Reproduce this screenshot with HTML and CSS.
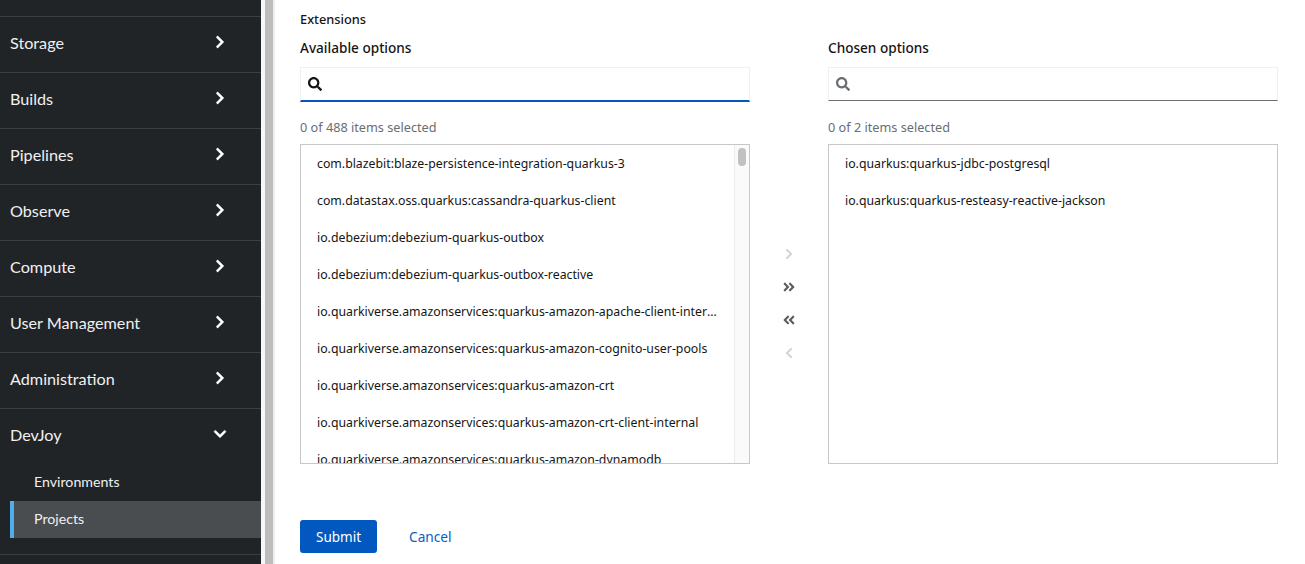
FILE: index.html
```html
<!DOCTYPE html>
<html>
<head>
  <meta charset="UTF-8">
  <title>Create Project</title>
  <link rel="stylesheet" href="styles.css">
</head>
<body>
  <svg class="defs" width="0" height="0">
    <symbol id="angle-right" viewBox="0 0 320 512"><path d="M285.476 272.971L91.132 467.314c-9.373 9.373-24.569 9.373-33.941 0l-22.667-22.667c-9.357-9.357-9.375-24.522-.04-33.901L188.505 256 34.484 101.255c-9.335-9.379-9.317-24.544.04-33.901l22.667-22.667c9.373-9.373 24.569-9.373 33.941 0L285.475 239.03c9.373 9.372 9.373 24.568.001 33.941z"/></symbol>
    <symbol id="angle-double" viewBox="0 0 448 512"><path d="M224.3 273l-136 136c-9.4 9.4-24.6 9.4-33.9 0l-22.6-22.6c-9.4-9.4-9.4-24.6 0-33.9l96.4-96.4-96.4-96.4c-9.4-9.4-9.4-24.6 0-33.9L54.3 103c9.4-9.4 24.6-9.4 33.9 0l136 136c9.5 9.4 9.5 24.6.1 34zm192-34l-136-136c-9.4-9.4-24.6-9.4-33.9 0l-22.6 22.6c-9.4 9.4-9.4 24.6 0 33.9l96.4 96.4-96.4 96.4c-9.4 9.4-9.4 24.6 0 33.9l22.6 22.6c9.4 9.4 24.6 9.4 33.9 0l136-136c9.4-9.2 9.4-24.4 0-33.8z"/></symbol>
    <symbol id="search" viewBox="0 0 512 512"><path d="M505 442.7L405.3 343c-4.5-4.5-10.6-7-17-7H372c27.6-35.3 44-79.7 44-128C416 93.1 322.9 0 208 0S0 93.1 0 208s93.1 208 208 208c48.3 0 92.7-16.4 128-44v16.3c0 6.4 2.5 12.5 7 17l99.7 99.7c9.4 9.4 24.6 9.4 33.9 0l28.3-28.3c9.4-9.4 9.4-24.6.1-34zM208 336c-70.7 0-128-57.2-128-128 0-70.7 57.2-128 128-128 70.7 0 128 57.2 128 128 0 70.7-57.2 128-128 128z"/></symbol>
  </svg>

  <div class="page">
    <!-- Sidebar -->
    <nav class="sidebar">
      <div class="nav-top"></div>
      <div class="nav-group"><span>Storage</span><svg class="nav-icon"><use href="#angle-right"/></svg></div>
      <div class="nav-group"><span>Builds</span><svg class="nav-icon"><use href="#angle-right"/></svg></div>
      <div class="nav-group"><span>Pipelines</span><svg class="nav-icon"><use href="#angle-right"/></svg></div>
      <div class="nav-group"><span>Observe</span><svg class="nav-icon"><use href="#angle-right"/></svg></div>
      <div class="nav-group"><span>Compute</span><svg class="nav-icon"><use href="#angle-right"/></svg></div>
      <div class="nav-group"><span>User Management</span><svg class="nav-icon"><use href="#angle-right"/></svg></div>
      <div class="nav-group"><span>Administration</span><svg class="nav-icon"><use href="#angle-right"/></svg></div>
      <div class="nav-section">
        <div class="nav-group open"><span>DevJoy</span><svg class="nav-icon down"><use href="#angle-right"/></svg></div>
        <a class="nav-link">Environments</a>
        <a class="nav-link current">Projects</a>
      </div>
    </nav>

    <div class="scrollbar"><div class="scrollbar-thumb"></div></div>

    <!-- Form -->
    <main class="content">
      <div class="field-label">Extensions</div>
      <div class="selector">
        <section class="pane">
          <div class="pane-title">Available options</div>
          <div class="search active"><svg class="search-icon"><use href="#search"/></svg></div>
          <div class="pane-status">0 of 488 items selected</div>
          <div class="pane-list">
            <ul class="items">
              <li>com.blazebit:blaze-persistence-integration-quarkus-3</li>
              <li>com.datastax.oss.quarkus:cassandra-quarkus-client</li>
              <li>io.debezium:debezium-quarkus-outbox</li>
              <li>io.debezium:debezium-quarkus-outbox-reactive</li>
              <li>io.quarkiverse.amazonservices:quarkus-amazon-apache-client-internal</li>
              <li>io.quarkiverse.amazonservices:quarkus-amazon-cognito-user-pools</li>
              <li>io.quarkiverse.amazonservices:quarkus-amazon-crt</li>
              <li>io.quarkiverse.amazonservices:quarkus-amazon-crt-client-internal</li>
              <li>io.quarkiverse.amazonservices:quarkus-amazon-dynamodb</li>
            </ul>
            <div class="list-scroll"><div class="list-thumb"></div></div>
          </div>
        </section>

        <div class="controls">
          <svg class="control disabled"><use href="#angle-right"/></svg>
          <svg class="control"><use href="#angle-double"/></svg>
          <svg class="control flip"><use href="#angle-double"/></svg>
          <svg class="control disabled flip"><use href="#angle-right"/></svg>
        </div>

        <section class="pane">
          <div class="pane-title">Chosen options</div>
          <div class="search"><svg class="search-icon"><use href="#search"/></svg></div>
          <div class="pane-status">0 of 2 items selected</div>
          <div class="pane-list">
            <ul class="items">
              <li>io.quarkus:quarkus-jdbc-postgresql</li>
              <li>io.quarkus:quarkus-resteasy-reactive-jackson</li>
            </ul>
          </div>
        </section>
      </div>

      <div class="actions">
        <button class="btn-submit">Submit</button>
        <a class="btn-cancel">Cancel</a>
      </div>
    </main>
  </div>
</body>
</html>
```

FILE: styles.css
```css
html, body {
  margin: 0;
  padding: 0;
  height: 564px;
  overflow: hidden;
  background: #fff;
}
body {
  font-family: "Noto Sans", Arial, sans-serif;
  color: #151515;
}
.defs {
  position: absolute;
}
.page {
  display: flex;
  height: 564px;
  overflow: hidden;
}

/* sidebar */
.sidebar {
  width: 261px;
  flex: none;
  background: #212427;
  color: #f0f0f0;
  font-family: Lato, sans-serif;
}
.nav-top {
  height: 17px;
  box-sizing: border-box;
  border-bottom: 1px solid #3c3f42;
}
.nav-group {
  height: 56px;
  box-sizing: border-box;
  padding: 0 36px 5px 10px;
  display: flex;
  align-items: center;
  justify-content: space-between;
  font-size: 16.2px;
  border-bottom: 1px solid #3c3f42;
}
.nav-icon {
  width: 10px;
  height: 14px;
  fill: #fff;
  stroke: #fff;
  stroke-width: 16;
  margin-top: -1px;
}
.nav-icon.down {
  transform: rotate(90deg);
}
.nav-section {
  height: 146px;
  box-sizing: border-box;
  border-bottom: 1px solid #3c3f42;
}
.nav-group.open {
  height: 55px;
  border-bottom: none;
}
.nav-link {
  display: block;
  height: 37px;
  line-height: 36px;
  margin-left: 10px;
  padding-left: 24px;
  font-size: 14.2px;
}
.nav-link.current {
  padding-left: 20px;
  background: #4a4d50;
  border-left: 4px solid #4dafef;
}

/* page scrollbar */
.scrollbar {
  width: 14px;
  flex: none;
  box-sizing: border-box;
  padding-left: 4px;
  background: #f7f7f7;
  border-right: 2px solid #ededed;
}
.scrollbar-thumb {
  width: 8px;
  height: 100%;
  background: #bdbdbd;
}

/* form */
.content {
  padding-left: 25px;
  flex: 1;
}
.field-label {
  font-size: 12.8px;
  font-weight: 500;
  line-height: 18px;
  margin-top: 10px;
}
.selector {
  display: grid;
  grid-template-columns: 450px 78px 450px;
  margin-top: 10px;
}
.pane-title {
  font-size: 13.6px;
  font-weight: 500;
  line-height: 20px;
}
.search {
  height: 34px;
  margin-top: 9px;
  box-sizing: border-box;
  border: 1px solid #f0f0f0;
  border-bottom: 1px solid #6a6e73;
  display: flex;
  align-items: center;
  padding-left: 7px;
}
.search.active {
  height: 35px;
  border-bottom: 2px solid #0258be;
}
.search-icon {
  width: 14px;
  height: 14px;
  fill: #6a6e73;
}
.search.active .search-icon {
  fill: #151515;
}
.pane-status {
  font-size: 12.7px;
  line-height: 18px;
  color: #6a6e73;
  margin-top: 17px;
}
.search.active + .pane-status {
  margin-top: 16px;
}
.pane-list {
  height: 320px;
  margin-top: 8px;
  box-sizing: border-box;
  border: 1px solid #c7c7c7;
  display: flex;
  overflow: hidden;
}
.items {
  flex: 1;
  min-width: 0;
  margin: 0;
  padding: 0;
  list-style: none;
}
.items li {
  height: 37px;
  line-height: 38px;
  padding: 0 16px;
  font-size: 12.3px;
  white-space: nowrap;
  overflow: hidden;
  text-overflow: ellipsis;
}
.list-scroll {
  width: 15px;
  flex: none;
  box-sizing: border-box;
  padding: 3px 3px 0 3px;
  background: #fafafa;
  border-left: 1px solid #ececec;
}
.list-thumb {
  width: 8px;
  height: 18px;
  border-radius: 4px;
  background: #c1c1c1;
}
.controls {
  display: flex;
  flex-direction: column;
  align-items: center;
  gap: 19px;
  padding-top: 209px;
}
.control {
  width: 14px;
  height: 14px;
  fill: #5b5f64;
}
.control.flip {
  transform: scaleX(-1);
}
.control.disabled {
  fill: #d2d2d2;
  transform: scale(.85);
}
.control.disabled.flip {
  transform: scale(-.85, .85);
}

/* buttons */
.actions {
  display: flex;
  align-items: center;
  gap: 32px;
  margin-top: 56px;
}
.btn-submit {
  width: 77px;
  height: 33px;
  border: none;
  border-radius: 3px;
  background: #0258be;
  color: #fff;
  font-family: "Noto Sans", Arial, sans-serif;
  font-size: 13.5px;
}
.btn-cancel {
  color: #0a5fc4;
  font-size: 13.7px;
}
```
